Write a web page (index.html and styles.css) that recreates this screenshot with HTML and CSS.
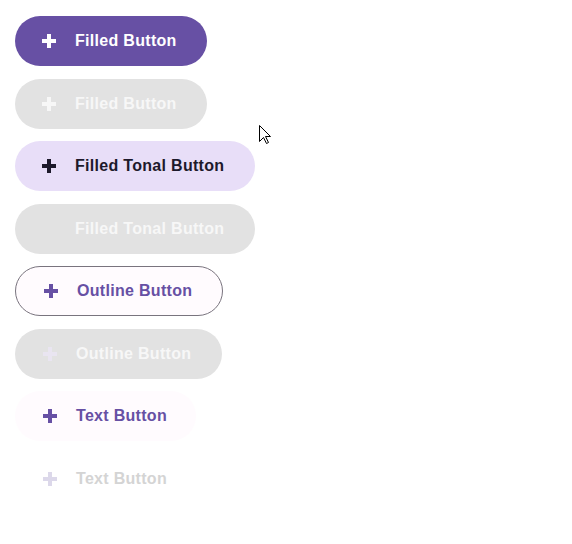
FILE: index.html
```html
<!DOCTYPE html>
<html>
<head>
<meta charset="utf-8">
<link rel="stylesheet" href="styles.css">
</head>
<body>
<div class="stack">
  <button class="btn filled"><svg class="ico" viewBox="0 0 14 14"><path d="M5 0h4v5h5v4H9v5H5V9H0V5h5z"/></svg><span>Filled Button</span></button>
  <button class="btn disabled"><svg class="ico" viewBox="0 0 14 14"><path d="M5 0h4v5h5v4H9v5H5V9H0V5h5z"/></svg><span>Filled Button</span></button>
  <button class="btn tonal"><svg class="ico" viewBox="0 0 14 14"><path d="M5 0h4v5h5v4H9v5H5V9H0V5h5z"/></svg><span>Filled Tonal Button</span></button>
  <button class="btn disabled tonal-off"><svg class="ico hidden" viewBox="0 0 14 14"><path d="M5 0h4v5h5v4H9v5H5V9H0V5h5z"/></svg><span>Filled Tonal Button</span></button>
  <button class="btn outline"><svg class="ico" viewBox="0 0 14 14"><path d="M5 0h4v5h5v4H9v5H5V9H0V5h5z"/></svg><span>Outline Button</span></button>
  <button class="btn disabled outline-off"><svg class="ico" viewBox="0 0 14 14"><path d="M5 0h4v5h5v4H9v5H5V9H0V5h5z"/></svg><span>Outline Button</span></button>
  <button class="btn text"><svg class="ico" viewBox="0 0 14 14"><path d="M5 0h4v5h5v4H9v5H5V9H0V5h5z"/></svg><span>Text Button</span></button>
  <button class="btn text-off"><svg class="ico" viewBox="0 0 14 14"><path d="M5 0h4v5h5v4H9v5H5V9H0V5h5z"/></svg><span>Text Button</span></button>
</div>
<svg class="cursor" viewBox="0 0 12 19" width="12" height="19"><path d="M0.5 0.5V16.5L4.5 12.5L7.5 18.5L9.5 17.5L6.5 11.5H11.5Z" fill="#fff" stroke="#000" stroke-width="1" stroke-linejoin="miter"/></svg>
</body>
</html>
```
FILE: styles.css
```css
html, body {
  margin: 0;
  padding: 0;
  background: #ffffff;
}
body {
  font-family: "Liberation Sans", Arial, sans-serif;
  position: relative;
  width: 572px;
  height: 544px;
  overflow: hidden;
}
.stack {
  display: flex;
  flex-direction: column;
  align-items: flex-start;
  gap: 12.5px;
  padding: 16px 0 0 15px;
}
.btn {
  display: flex;
  align-items: center;
  height: 50px;
  border-radius: 25px;
  border: none;
  padding: 0 30px 0 27px;
  font-family: "Liberation Sans", Arial, sans-serif;
  font-weight: bold;
  font-size: 16px;
  letter-spacing: 0.3px;
  margin: 0;
  box-sizing: border-box;
}
.ico {
  width: 14px;
  height: 14px;
  margin-right: 19px;
  flex: none;
}
.ico path { fill: currentColor; }
.hidden { visibility: hidden; }
.filled {
  background: #6750a4;
  color: #ffffff;
}
.disabled {
  background: #e2e2e2;
  color: #f7f7f7;
}
.tonal {
  background: #e8def8;
  color: #1d192b;
  padding-right: 31px;
}
.tonal-off {
  padding-right: 31px;
}
.outline {
  background: #fffbfe;
  color: #6750a4;
  border: 1px solid #79747e;
  padding-left: 28px;
  padding-right: 30px;
}
.outline-off {
  padding-left: 28px;
  padding-right: 31px;
}
.outline-off .ico { color: #e9e5f1; }
.text {
  background: #fffbfe;
  color: #6750a4;
  padding-left: 28px;
  padding-right: 29px;
}
.text-off {
  background: transparent;
  color: #d4d4d4;
  padding-left: 28px;
  padding-right: 29px;
}
.text-off .ico { color: #dcd8ea; }
.cursor {
  position: absolute;
  left: 259px;
  top: 125px;
}
```
